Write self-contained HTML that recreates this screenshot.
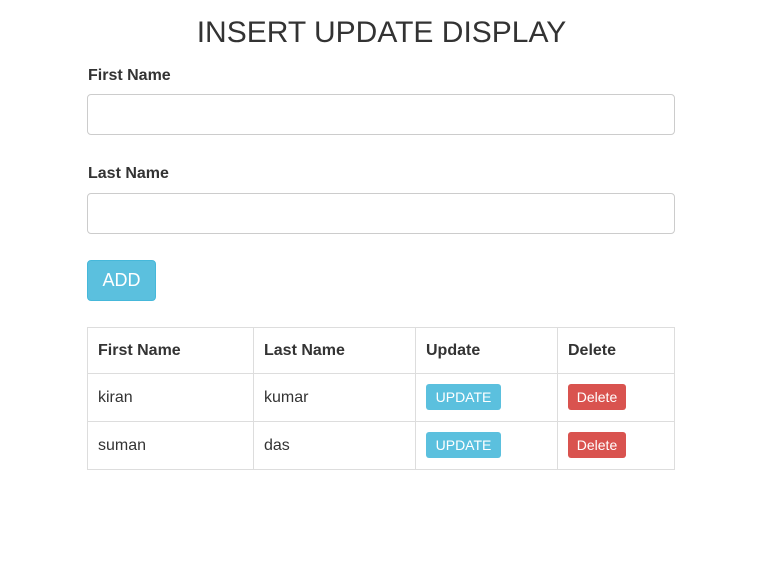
<!DOCTYPE html>
<html><head><style>
body{margin:0;width:771px;height:576px;background:#fff;font-family:"Liberation Sans",Arial,sans-serif;color:#333;position:relative}
.a{position:absolute}
h1{position:absolute;top:14px;left:0;width:763px;text-align:center;margin:0;font-weight:normal;font-size:30px;line-height:38px}
label{position:absolute;left:88px;font-weight:bold;font-size:16px}
.in{position:absolute;left:87px;width:586px;height:39px;border:1px solid #ccc;border-radius:4px}
.add{left:87px;top:260px;width:67px;height:39px;background:#5bc0de;border:1px solid #46b8da;border-radius:4px;color:#fff;font-size:18px;text-align:center;line-height:39px}
table{position:absolute;left:87px;top:327px;width:588px;border-collapse:collapse;font-size:16px}
td,th{border:1px solid #ddd;padding:0 10px;text-align:left}
th{height:45px}
td{height:47px}
.b{display:inline-block;color:#fff;font-size:14px;border-radius:3px;line-height:26px;text-align:center;position:relative;top:-1px}
.u{background:#5bc0de;width:75px}.d{background:#d9534f;width:58px}
</style></head><body>
<h1>INSERT UPDATE DISPLAY</h1>
<label style="top:67px">First Name</label>
<div class="in" style="top:94px"></div>
<label style="top:165px">Last Name</label>
<div class="in" style="top:193px"></div>
<div class="a add">ADD</div>
<table>
<tr><th style="width:145px">First Name</th><th style="width:141px">Last Name</th><th style="width:121px">Update</th><th>Delete</th></tr>
<tr><td>kiran</td><td>kumar</td><td><span class="b u">UPDATE</span></td><td><span class="b d">Delete</span></td></tr>
<tr><td>suman</td><td>das</td><td><span class="b u">UPDATE</span></td><td><span class="b d">Delete</span></td></tr>
</table>
</body></html>
